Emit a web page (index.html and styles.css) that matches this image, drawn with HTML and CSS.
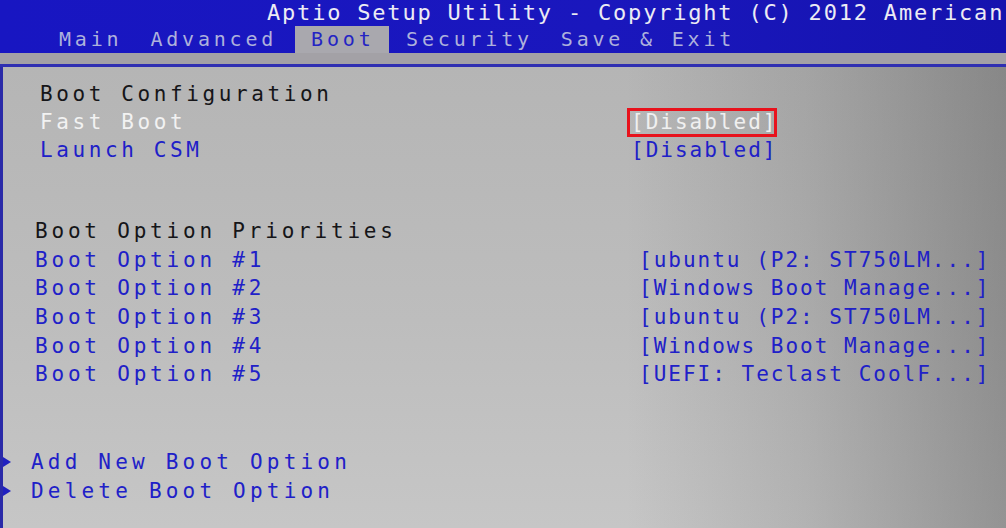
FILE: index.html
```html
<!DOCTYPE html>
<html>
<head>
<meta charset="utf-8">
<link rel="stylesheet" href="styles.css">
</head>
<body>
<div class="screen">
  <header class="topbar">
    <div class="title">Aptio Setup Utility - Copyright (C) 2012 American</div>
    <nav class="tabs">
      <span class="tab">Main</span>
      <span class="tab">Advanced</span>
      <span class="tab active">Boot</span>
      <span class="tab">Security</span>
      <span class="tab">Save &amp; Exit</span>
    </nav>
  </header>
  <div class="strip"></div>
  <main class="panel">
    <section class="group g1">
      <div class="row"><span class="label heading">Boot Configuration</span></div>
      <div class="row"><span class="label hl">Fast Boot</span><span class="value sel">[Disabled]</span></div>
      <div class="row"><span class="label link">Launch CSM</span><span class="value">[Disabled]</span></div>
    </section>
    <section class="group g2">
      <div class="row"><span class="label heading">Boot Option Priorities</span></div>
      <div class="row"><span class="label link">Boot Option #1</span><span class="value">[ubuntu (P2: ST750LM...]</span></div>
      <div class="row"><span class="label link">Boot Option #2</span><span class="value">[Windows Boot Manage...]</span></div>
      <div class="row"><span class="label link">Boot Option #3</span><span class="value">[ubuntu (P2: ST750LM...]</span></div>
      <div class="row"><span class="label link">Boot Option #4</span><span class="value">[Windows Boot Manage...]</span></div>
      <div class="row"><span class="label link">Boot Option #5</span><span class="value">[UEFI: Teclast CoolF...]</span></div>
    </section>
    <section class="group g3">
      <div class="row sub"><span class="arrow"></span><span class="label link">Add New Boot Option</span></div>
      <div class="row sub"><span class="arrow"></span><span class="label link">Delete Boot Option</span></div>
    </section>
  </main>
</div>
</body>
</html>
```

FILE: styles.css
```css
* { box-sizing: border-box; }
html, body { margin: 0; padding: 0; }
body {
  width: 1006px;
  height: 528px;
  overflow: hidden;
  font-family: "DejaVu Sans Mono", "Liberation Mono", monospace;
  background: #b8b8b8;
}
.screen {
  width: 1006px;
  height: 528px;
  display: flex;
  flex-direction: column;
}
.topbar {
  background: linear-gradient(to right, #1816c2, #1a17bd 60%, #1513ae);
  height: 53px;
  display: flex;
  flex-direction: column;
}
.title {
  height: 26px;
  line-height: 26px;
  font-size: 22px;
  letter-spacing: 1.8px;
  color: #ecebf4;
  padding-left: 267px;
  white-space: nowrap;
}
.tabs {
  display: flex;
  height: 27px;
  padding-left: 43px;
}
.tab {
  font-size: 20px;
  line-height: 27px;
  letter-spacing: 3.8px;
  color: #aeb1dc;
  padding: 0 12px 0 16px;
  white-space: nowrap;
}
.tab.active {
  background: #a9a8ae;
  color: #2424c4;
  width: 94px;
  margin-left: 6px;
}
.tab.active + .tab { padding-left: 17px; }
.strip {
  height: 11px;
  background: #a3a1a6;
  border-bottom: 3px solid #2f2fb2;
  box-sizing: content-box;
}
.panel {
  flex: 1;
  border-left: 3px solid #2a2aa8;
  background:
    linear-gradient(to right, rgba(0,0,0,0) 0%, rgba(0,0,0,0) 62%, rgba(40,40,40,0.12) 80%, rgba(30,30,30,0.30) 100%),
    linear-gradient(to bottom, #b5b5b5 0%, #bdbdbd 55%, #c6c6c6 100%);
  padding-top: 13px;
  display: flex;
  flex-direction: column;
}
.group { display: flex; flex-direction: column; }
.row {
  display: flex;
  align-items: center;
  height: 28px;
  font-size: 21px;
  white-space: nowrap;
}
.g1 { padding-left: 37px; }
.g1 .label { width: 591px; letter-spacing: 3.6px; }
.g2 { padding-left: 32px; margin-top: 53px; }
.g2 .row { height: 28.6px; }
.g2 .label { width: 604px; letter-spacing: 3.8px; }
.g3 { margin-top: 59px; }
.g3 .row { height: 29px; }
.g3 .label { letter-spacing: 4.2px; }
.label { line-height: 28px; }
.heading { color: #151518; }
.hl { color: #f2f2f2; }
.link { color: #2020c8; }
.value {
  color: #2020c8;
  letter-spacing: 2.0px;
  line-height: 28px;
}
.value.sel {
  color: #f0f0f0;
  border: 3px solid #e8121c;
  line-height: 23px;
  padding: 0 0 0 1px;
  margin-left: -4px;
  width: 150px;
}
.arrow {
  width: 0;
  height: 0;
  border-top: 5px solid transparent;
  border-bottom: 5px solid transparent;
  border-left: 8px solid #2020c0;
  margin-right: 20px;
}
```
